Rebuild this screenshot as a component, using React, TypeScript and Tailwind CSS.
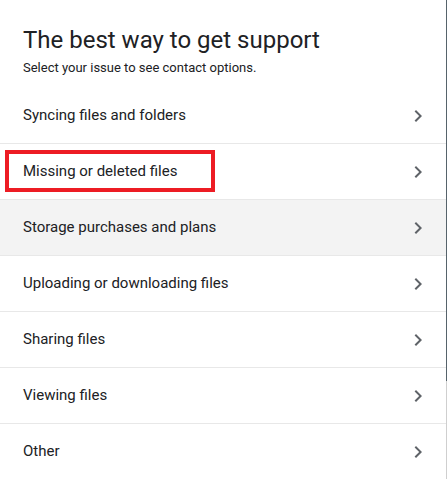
import React from 'react';

const topics = [
  'Syncing files and folders',
  'Missing or deleted files',
  'Storage purchases and plans',
  'Uploading or downloading files',
  'Sharing files',
  'Viewing files',
  'Other',
];

const ChevronRight: React.FC = () => (
  <svg viewBox="0 0 24 24" className="w-6 h-6 fill-[#5f6368]">
    <path d="M10 6L8.59 7.41 13.17 12l-4.58 4.59L10 18l6-6z" />
  </svg>
);

export default function App() {
  return (
    <div className="flex w-[448px] h-[479px] overflow-hidden bg-white font-['Roboto',sans-serif]">
      <div className="relative flex-1 min-w-0">
        <div className="px-[23px] pt-[24px] pb-[12px]">
          <h1 className="text-[24px] leading-[32px] text-[#202124] font-normal">
            The best way to get support
          </h1>
          <p className="mt-1 text-[13px] leading-[16px] text-[#202124]">
            Select your issue to see contact options.
          </p>
        </div>

        <ul>
          {topics.map((topic, i) => (
            <li
              key={topic}
              className={`flex items-center justify-between h-[56px] pl-[23px] pr-[16px] border-b border-[#e8e8e8] ${
                i === 2 ? 'bg-[#f3f3f3]' : 'bg-white'
              }`}
            >
              <span className="text-[15px] text-[#202124]">{topic}</span>
              <ChevronRight />
            </li>
          ))}
        </ul>

        {/* annotation box */}
        <div className="absolute left-[5px] top-[150px] w-[210px] h-[42px] border-[4px] border-[#ed1c24]" />
      </div>

      <div className="flex flex-col w-px">
        <div className="h-[381px] bg-[#56636b]" />
        <div className="flex-1 bg-[#cfcfcf]" />
      </div>
      <div className="w-px bg-white" />
    </div>
  );
}
